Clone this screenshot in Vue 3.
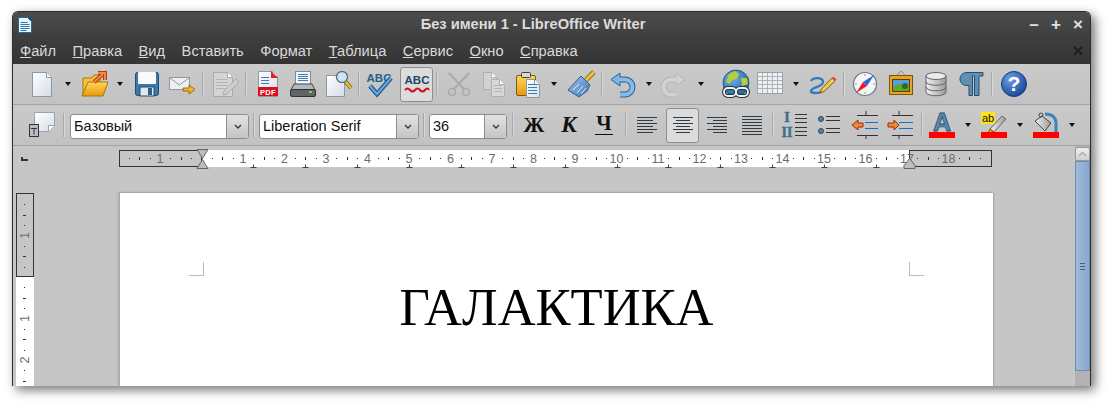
<template>
  <div class="shot">
    <svg class="defs" width="0" height="0">
      <defs>
        <linearGradient id="paper" x1="0" y1="0" x2="1" y2="1"><stop offset="0" stop-color="#fff" /><stop offset="1" stop-color="#d5dde8" /></linearGradient>
        <linearGradient id="folder" x1="0" y1="0" x2="0" y2="1"><stop offset="0" stop-color="#ffd65c" /><stop offset="1" stop-color="#e99a0c" /></linearGradient>
        <linearGradient id="blue" x1="0" y1="0" x2="1" y2="1"><stop offset="0" stop-color="#a5c8ee" /><stop offset="1" stop-color="#3a74b4" /></linearGradient>
        <linearGradient id="steel" x1="0" y1="0" x2="1" y2="0"><stop offset="0" stop-color="#f2f2f2" /><stop offset="1" stop-color="#9a9a9a" /></linearGradient>
        <radialGradient id="ball" cx=".35" cy=".3" r=".8"><stop offset="0" stop-color="#6d9ee0" /><stop offset="1" stop-color="#123f94" /></radialGradient>
        <radialGradient id="earth" cx=".35" cy=".3" r=".8"><stop offset="0" stop-color="#6fb0e6" /><stop offset="1" stop-color="#1d5f9e" /></radialGradient>
      </defs>
    </svg>

    <div class="window">
      <div class="titlebar">
        <svg class="app-icon" width="14" height="16" viewBox="0 0 14 16">
          <path d="M.5.5h9l4 4v11H.5z" fill="#eef4fa" stroke="#1d6a9e" />
          <path d="M9.5.5h4v4z" fill="#14507c" />
          <path d="M2.5 5.500h7M2.500 7.500h9M2.500 9.500h9M2.500 11.500h9M2.500 13.500h6" stroke="#2a79ae" />
        </svg>
        <div class="title">Без имени 1 - LibreOffice Writer</div>
        <div class="win-btns"><span>–</span><span>+</span><span>×</span></div>
      </div>

      <div class="menubar">
        <span v-for="m in menus" :key="m.join('')" class="menu-item">{{ m[0] }}<u>{{ m[1] }}</u>{{ m[2] }}</span>
        <span class="menu-close">×</span>
      </div>

      <div v-for="(row, r) in rows" :key="r" class="toolbar">
        <template v-for="item in row" :key="item.x">
          <div v-if="item.kind === 'grip'" class="grip" :style="{ marginLeft: item.ml + 'px' }"></div>
          <div v-else-if="item.kind === 'sep'" class="sep" :style="{ marginLeft: item.ml + 'px' }"></div>
          <div v-else-if="item.kind === 'dd'" class="drop" :style="{ marginLeft: item.ml + 'px' }"></div>
          <div v-else-if="item.kind === 'combo'" class="combo" :style="{ marginLeft: item.ml + 'px', width: item.w + 'px' }">
            <span class="combo-text">{{ item.text }}</span>
            <span class="combo-btn">
              <svg width="8" height="5" viewBox="0 0 8 5"><path d="M1 1l3 3 3-3" fill="none" stroke="#333" stroke-width="1.300" /></svg>
            </span>
          </div>
          <div v-else class="tool" :class="{ active: item.active, off: item.off }" :style="{ marginLeft: item.ml + 'px', width: item.w + 'px' }">
            <svg width="30" height="30" viewBox="0 0 30 30" v-html="icons[item.icon]"></svg>
          </div>
        </template>
      </div>

      <div class="work">
        <div class="work-main">
          <div class="ruler-row">
            <div class="tab-mark"></div>
            <svg class="h-ruler" width="875" height="20" viewBox="0 0 875 20">
              <rect x="82" y="1" width="709" height="17" fill="#fff" />
              <rect x=".5" y="1.500" width="82" height="16" fill="none" stroke="#333" />
              <rect x="790.500" y="1.500" width="82" height="16" fill="none" stroke="#333" />
              <template v-for="m in hMarks" :key="m.k">
                <text v-if="m.label" :x="m.x" y="14" class="r-num" text-anchor="middle">{{ m.label }}</text>
                <rect v-else-if="m.half" :x="m.x" y="8" width="1" height="3" fill="#333" />
                <rect v-else :x="m.x" y="9" width="1" height="1" fill="#333" />
              </template>
              <path v-for="t in hTabs" :key="t" :d="`M${t} 15.500v3M${t - 3} 18.500h6`" stroke="#444" fill="none" />
              <path d="M78 .5h11l-5.500 9zM78 19.500h11l-5.500-9z" fill="#bdbdbd" stroke="#666" />
              <path d="M785 19.500h11v-3l-5.500-7-5.500 7z" fill="#bdbdbd" stroke="#666" />
            </svg>
          </div>
          <div class="doc-row">
            <svg class="v-ruler" width="18" height="193" viewBox="0 0 18 193">
              <rect x="0" y="84" width="18" height="109" fill="#fff" />
              <rect x=".5" y=".5" width="17" height="83" fill="none" stroke="#333" />
              <template v-for="m in vMarks" :key="m.k">
                <text v-if="m.label" class="r-num" text-anchor="middle" :transform="`translate(13 ${m.y}) rotate(-90)`">{{ m.label }}</text>
                <rect v-else-if="m.half" x="7" :y="m.y" width="3" height="1" fill="#333" />
                <rect v-else x="8" :y="m.y" width="1" height="1" fill="#333" />
              </template>
            </svg>
            <div class="page">
              <div class="marks"><i class="mark-l"></i><i class="mark-r"></i></div>
              <h1 class="doc-text">ГАЛАКТИКА</h1>
            </div>
          </div>
        </div>
        <div class="scrollbar">
          <div class="sb-up">
            <svg width="9" height="6" viewBox="0 0 9 6"><path d="M1 5l3.500-3.500L8 5" fill="none" stroke="#aaa" stroke-width="1.300" /></svg>
          </div>
          <div class="sb-thumb"><b></b><b></b><b></b></div>
        </div>
      </div>
    </div>
  </div>
</template>

<script setup>
const menus = [
  ['', 'Ф', 'айл'], ['', 'П', 'равка'], ['', 'В', 'ид'], ['Вставить', '', ''], ['Фо', 'р', 'мат'],
  ['', 'Т', 'аблица'], ['', 'С', 'ервис'], ['', 'О', 'кно'], ['', 'С', 'правка'],
]

const doc = (x, y, w, h, f = 'url(#paper)', s = '#8b98a8') =>
  `<path d="M${x + .5} ${y + .5}h${w - 6}l5 5v${h - 5}h-${w - 1}z" fill="${f}" stroke="${s}"/><path d="M${x + w - 5.500} ${y + .5}v5h5" fill="#fff" stroke="${s}"/>`
const lines = (x, ys, w, c = '#3b7cb5') => ys.map(y => `<path d="M${x} ${y + .5}h${w}" stroke="${c}"/>`).join('')
const redBar = `<rect x="2" y="22" width="26" height="6" fill="#f00"/>`

const icons = {
  new: doc(5, 3, 20, 24),
  open: `<path d="M3 9h9l2-3h6v20H3z" fill="#f4c33c" stroke="#a87708"/><path d="M8 13h20l-5 14H2z" fill="url(#folder)" stroke="#a87708"/><path d="M14 13l9-8M18 4h7v7" fill="none" stroke="#b5391a" stroke-width="4"/><path d="M14 13l9-8M18 4h7v7" fill="none" stroke="#f08a3c" stroke-width="2"/>`,
  save: `<rect x="3.500" y="3.500" width="23" height="23" rx="2" fill="#3c78aa" stroke="#1e4d78"/><rect x="6" y="3" width="18" height="12" rx="1" fill="#f8fafb"/><rect x="8" y="18" width="14" height="9" fill="#e2e8ec" stroke="#1e4d78"/><rect x="16" y="19" width="4" height="7" fill="#2e5f8c"/>`,
  mail: `<rect x="2.500" y="8.500" width="20" height="12" fill="#eef1f4" stroke="#8d99a6"/><path d="M3 9l9.500 7L22 9" fill="none" stroke="#8d99a6"/><path d="M16 19h6v-3l6 4.500-6 4.500v-3h-6z" fill="#f3b32c" stroke="#a06b10"/>`,
  edit: doc(3, 3, 20, 24, '#d4d4d4', '#aaa') + lines(6, [10, 13, 16, 19], 12, '#b5b5b5') + `<path d="M14 22l12-12 3 3-12 12-4 1z" fill="#cfcfcf" stroke="#aaa"/>`,
  pdf: doc(5, 2, 20, 25) + `<path d="M18 2l7 7h-7z" fill="#e0202a"/>` + lines(8, [8, 11, 14], 8) + `<rect x="5" y="18" width="20" height="9" fill="#d6101c"/><text x="15" y="25.500" text-anchor="middle" class="pdf">PDF</text>`,
  print: `<rect x="7.500" y="2.500" width="15" height="14" fill="#f4f7fa" stroke="#7e8c9a"/>` + lines(10, [5, 7, 9, 11], 10) + `<path d="M6 15h18l3.500 7H2.500z" fill="#b4b9bd" stroke="#444"/><rect x="2.500" y="20.500" width="25" height="7" rx="1.500" fill="#5e6468" stroke="#2e3336"/><rect x="21" y="22" width="3" height="2" fill="#7dd040"/>`,
  preview: doc(2, 6, 19, 21) + `<path d="M21 12l6 7" stroke="#8a6a10" stroke-width="4"/><path d="M21 12l6 7" stroke="#e8c23a" stroke-width="2"/><circle cx="18" cy="8" r="5.500" fill="#cfe4f6" stroke="#62717e" stroke-width="1.400"/>`,
  spell: `<text x="14" y="13" text-anchor="middle" class="abc c1">ABC</text><path d="M5 17l7 8L26 9" fill="none" stroke="#1d4f80" stroke-width="4.500"/><path d="M5 17l7 8L26 9" fill="none" stroke="#62a8e8" stroke-width="2.400"/>`,
  wave: `<text x="15" y="15" text-anchor="middle" class="abc c2">ABC</text><path d="M3 21q2.500-3 5 0t5 0 5 0 5 0 4 0" fill="none" stroke="#d3121c" stroke-width="2"/>`,
  cut: `<circle cx="8" cy="23" r="3.500" fill="none" stroke="#aaa" stroke-width="1.600"/><circle cx="22" cy="23" r="3.500" fill="none" stroke="#aaa" stroke-width="1.600"/><path d="M10 20L25 4M20 20L5 4" stroke="#aaa" stroke-width="2"/>`,
  copy: doc(4, 3, 14, 17, '#d2d2d2', '#b0b0b0') + doc(12, 10, 14, 17, '#d8d8d8', '#b0b0b0') + lines(15, [16, 19, 22], 8, '#b5b5b5'),
  paste: `<rect x="3.500" y="6.500" width="19" height="20" rx="1.500" fill="url(#folder)" stroke="#7d5a10"/><rect x="8.500" y="3.500" width="9" height="5" rx="1" fill="#d7d7d7" stroke="#444"/>` + doc(13, 10, 14, 18) + lines(15, [15, 18, 21, 24], 9),
  brush: `<path d="M20 11l8-8" stroke="#96701a" stroke-width="5"/><path d="M20 11l8-8" stroke="#efc040" stroke-width="3"/><path d="M15 7l9 9-3 6-8 6-11-7z" fill="url(#blue)" stroke="#2c5f94"/><path d="M7 21l6-6M11 24l6-7M15 25l5-6" stroke="#e4f0fb"/>`,
  undo: `<path d="M11 10.500h6a7.500 7.500 0 010 15h-5" fill="none" stroke="#29608f" stroke-width="6"/><path d="M3 10.500L12 4v13z" fill="#7fb4e2" stroke="#29608f"/><path d="M11 10.500h6a7.500 7.500 0 010 15h-5" fill="none" stroke="#86bbe8" stroke-width="4"/>`,
  redo: `<path d="M19 10.500h-6a7.500 7.500 0 000 15h5" fill="none" stroke="#b5b5b5" stroke-width="6"/><path d="M27 10.500L18 4v13z" fill="#d2d2d2" stroke="#b5b5b5"/><path d="M19 10.500h-6a7.500 7.500 0 000 15h5" fill="none" stroke="#d2d2d2" stroke-width="4"/>`,
  globe: `<circle cx="15" cy="14" r="13" fill="url(#earth)" stroke="#2a5c70"/><path d="M8 5l6-3 4 3-2 5-5 1-2 4-4-2zM20 9l6 0 1 6-6 2z" fill="#b5cd3a"/><rect x="3" y="19" width="12" height="8" rx="4" fill="none" stroke="#27343e" stroke-width="4"/><rect x="15" y="19" width="12" height="8" rx="4" fill="none" stroke="#27343e" stroke-width="4"/><rect x="3" y="19" width="12" height="8" rx="4" fill="none" stroke="#eef2f4" stroke-width="1.800"/><rect x="15" y="19" width="12" height="8" rx="4" fill="none" stroke="#eef2f4" stroke-width="1.800"/>`,
  table: `<rect x="2.500" y="3.500" width="25" height="21" fill="#eef0f2" stroke="#9aa2aa"/><path d="M7.500 4v20M12.500 4v20M17.500 4v20M22.500 4v20M3 7.500h24M3 11.500h24M3 15.500h24M3 19.500h24" stroke="#aab2ba"/>`,
  draw: `<path d="M4 12C6 8 16 8 16 13 16 18 4 18 4 22 4 25 12 24 14 23" fill="none" stroke="#2f78c4" stroke-width="2.400"/><path d="M13 24l1.500-4L25 9l3 3-11 10.500z" fill="#f3cd4a" stroke="#7a5a12"/><path d="M25 9l1.500-1.500 3 3L28 12z" fill="#e2484c"/>`,
  nav: `<circle cx="15" cy="15" r="11.500" fill="#f5f5f5" stroke="#6c7680" stroke-width="1.200"/><path d="M15 5v2M15 23v2M5 15h2M23 15h2" stroke="#999"/><path d="M24 6l-11 7 4 4z" fill="#2a68d8"/><path d="M6 24l7-11 4 4z" fill="#e81e2c"/>`,
  gallery: `<path d="M11 6l4-4 4 4" fill="none" stroke="#8c8c8c"/><rect x="3.500" y="6.500" width="23" height="19" fill="#eaa520" stroke="#7c5208"/><rect x="6.500" y="10.500" width="17" height="12" fill="#55a0dc" stroke="#5c3c08"/><path d="M7 18l6-3 10 2v5H7z" fill="#5ea82c"/><circle cx="19" cy="17" r="3" fill="#2c6c1a"/>`,
  db: `<path d="M5 7v16c0 5 20 5 20 0V7z" fill="url(#steel)" stroke="#666"/><ellipse cx="15" cy="7" rx="10" ry="3.500" fill="#e8ecef" stroke="#666"/><path d="M5 12.500c0 5 20 5 20 0M5 18c0 5 20 5 20 0" fill="none" stroke="#666"/>`,
  para: `<path d="M27 3.500H11C6 3.500 4 7 4 10s2 6.500 7 6.500h2v10h3.500V7h2v19.500H23V7h4z" fill="#5f8fb4" stroke="#24506f"/>`,
  help: `<circle cx="15" cy="15" r="12.500" fill="url(#ball)" stroke="#123a80"/><text x="15" y="22" text-anchor="middle" class="q">?</text>`,

  styles: `<path d="M6.500 2.500h20v13l-6 6H6.500z" fill="url(#paper)" stroke="#9aa4ae"/><path d="M20.500 21.500v-6h6" fill="#fff" stroke="#9aa4ae"/><rect x="1.500" y="14.500" width="9" height="12" fill="#b9bdc1" stroke="#333"/><path d="M3 18.500h6M6 18.500v6" stroke="#333"/>`,
  bold: `<text x="15" y="22" text-anchor="middle" class="ser b">Ж</text>`,
  italic: `<text x="15" y="22" text-anchor="middle" class="ser i">К</text>`,
  under: `<text x="15" y="20" text-anchor="middle" class="ser b">Ч</text><path d="M6 24.500h18" stroke="#111"/>`,
  alignL: lines(5, [7, 13, 19], 20, '#2e3a46') + lines(5, [10, 16, 22], 16, '#2e3a46'),
  alignC: lines(5, [7, 13, 19], 20, '#2e3a46') + lines(8, [10, 16, 22], 14, '#2e3a46'),
  alignR: lines(5, [7, 13, 19], 20, '#2e3a46') + lines(11, [10, 16, 22], 14, '#2e3a46'),
  alignJ: lines(5, [6, 9, 12, 15, 18, 21, 24], 20, '#2e3a46'),
  num: `<text x="7" y="12" text-anchor="middle" class="ser nm">I</text><text x="7" y="27" text-anchor="middle" class="ser nm">II</text>` + lines(15, [4, 8, 12, 17, 21, 25], 12, '#333'),
  bullet: `<circle cx="6" cy="9" r="2.500" fill="#54809e" stroke="#2c4a5e"/><circle cx="6" cy="21" r="2.500" fill="#54809e" stroke="#2c4a5e"/>` + lines(11, [6, 10, 18, 22], 14, '#333'),
  indL: lines(7, [5, 25], 21, '#333') + lines(15, [12, 18], 13, '#1470c8') + `<path d="M16 1v4M16 25v4" stroke="#333"/><path d="M2 15l6-5v3h5v4H8v3z" fill="#f08a2c" stroke="#9a2d10"/>`,
  indR: lines(5, [5, 25], 21, '#333') + lines(12, [12, 18], 14, '#1470c8') + `<path d="M12 1v4M12 25v4" stroke="#333"/><path d="M12 15L7 10v3H1v4h6v3z" fill="#f08a2c" stroke="#9a2d10"/>`,
  fontCol: `<text x="15" y="21" text-anchor="middle" class="acol">A</text>` + redBar,
  hilite: `<rect x="2" y="2" width="14" height="12" fill="#ffe21a"/><text x="9" y="12" text-anchor="middle" class="ab">ab</text><path d="M11 19l12-13 4 3-12 13z" fill="url(#steel)" stroke="#666"/><path d="M9 23l2-4 4 3z" fill="#f0a020" stroke="#8a5a10"/>` + redBar,
  fill: `<path d="M4 11l7-5 9 7-6 8z" fill="url(#steel)" stroke="#444"/><circle cx="10" cy="5" r="2" fill="none" stroke="#444"/><path d="M14 4q10 0 11 8v11h-2" fill="none" stroke="#3d82be" stroke-width="3"/>` + redBar,
}

// x is the centre of each item in page pixels, margins follow from it
const flow = items => {
  let end = 13
  return items.map(([x, kind, extra]) => {
    const w = kind === 'grip' ? 4 : kind === 'sep' ? 2 : kind === 'dd' ? 8 : (extra && extra.w) || 30
    const it = { x, kind, w, ml: x - w / 2 - end, icon: kind, ...extra }
    end = x + w / 2
    return it
  })
}

const rows = [
  flow([
    [17, 'grip'], [42, 'new'], [68, 'dd'], [95, 'open'], [120, 'dd'], [147, 'save'], [182, 'mail'], [203, 'sep'],
    [225, 'edit', { off: true }], [246, 'sep'], [268, 'pdf'], [303, 'print'], [339, 'preview'], [359, 'sep'],
    [380, 'spell'], [416.5, 'wave', { active: true, w: 33 }], [437, 'sep'], [459, 'cut'], [494, 'copy'], [528, 'paste'],
    [554, 'dd'], [581, 'brush'], [602, 'sep'], [623, 'undo'], [649, 'dd'], [673, 'redo'], [701, 'dd'], [736, 'globe'],
    [770, 'table'], [796, 'dd'], [822, 'draw'], [844, 'sep'], [865, 'nav'], [901, 'gallery'], [936, 'db'], [971, 'para'],
    [992, 'sep'], [1014, 'help'],
  ]),
  flow([
    [17, 'grip'], [43, 'styles'], [64, 'sep'], [159.5, 'combo', { w: 179, text: 'Базовый' }], [254, 'sep'],
    [339, 'combo', { w: 160, text: 'Liberation Serif' }], [424, 'sep'], [468, 'combo', { w: 78, text: '36' }], [513, 'sep'],
    [534, 'bold'], [569, 'italic'], [604, 'under'], [626, 'sep'], [647, 'alignL'], [682.5, 'alignC', { active: true, w: 33 }],
    [717, 'alignR'], [752, 'alignJ'], [773, 'sep'], [795, 'num'], [830, 'bullet'], [865, 'indL'], [902, 'indR'], [922, 'sep'],
    [942, 'fontCol'], [968, 'dd'], [994, 'hilite'], [1020, 'dd'], [1046, 'fill'], [1072, 'dd'],
  ]),
]

const STEP = 41.5
const hMarks = []
for (let k = -7; k <= 75; k++) {
  const n = k / 4
  const x = 82.5 + n * STEP
  if (k === 0) continue
  if (k % 4 === 0) hMarks.push({ k, x, label: String(Math.abs(n)) })
  else hMarks.push({ k, x: Math.round(x), half: k % 2 === 0 })
}
const hTabs = []
for (let n = 1; n <= 13; n++) hTabs.push(Math.round(82.5 + n * 1.25 * STEP) + .5)

const vMarks = []
for (let k = -7; k <= 10; k++) {
  const n = k / 4
  const y = 84 + n * STEP
  if (k === 0) continue
  if (k % 4 === 0) vMarks.push({ k, y, label: String(Math.abs(n)) })
  else vMarks.push({ k, y: Math.round(y), half: k % 2 === 0 })
}
</script>

<style>
html, body { background: #fff; overflow: hidden; }
.pdf { font: 700 7.500px "Liberation Sans", sans-serif; fill: #fff; letter-spacing: .3px; }
.abc { font: 700 11.500px "Liberation Sans", sans-serif; }
.c1 { fill: #2a5f8e; }
.c2 { fill: #23456a; }
.q { font: 700 21px "Liberation Sans", sans-serif; fill: #fff; }
.ser { font-family: "Liberation Serif", serif; fill: #111; }
.ser.b { font-size: 21px; font-weight: 700; }
.ser.i { font-size: 23px; font-weight: 700; font-style: italic; }
.ser.nm { font-size: 14px; font-weight: 700; fill: #3f6d90; stroke: #3f6d90; stroke-width: .4px; }
.acol { font: 700 25px "Liberation Sans", sans-serif; fill: #5b8bb0; stroke: #24506f; stroke-width: .8px; }
.ab { font: 400 11px "Liberation Sans", sans-serif; fill: #111; }
</style>

<style scoped>
.shot {
  width: 1110px;
  height: 405px;
  padding: 11px 0 0 12px;
  box-sizing: border-box;
  overflow: hidden;
  font-family: "Liberation Sans", Arial, sans-serif;
}
.defs { display: block; height: 0; }
.window {
  width: 1079px;
  height: 375px;
  box-sizing: border-box;
  display: flex;
  flex-direction: column;
  border: 1px solid #2e2e2e;
  border-bottom: 0;
  border-radius: 6px 6px 0 0;
  background: #c6c6c6;
  box-shadow: 4px 4px 11px rgba(0, 0, 0, .55);
  overflow: hidden;
}
.titlebar {
  height: 26px;
  flex: none;
  display: flex;
  align-items: center;
  padding: 0 5px;
  background: linear-gradient(#4c4c4c, #3e3e3e);
}
.app-icon { flex: none; margin-top: -1px; }
.title {
  flex: 1;
  text-align: center;
  padding-left: 7px;
  color: #dcdcdc;
  font-size: 14.670px;
  font-weight: 700;
  margin-top: -2px;
}
.win-btns { display: flex; gap: 8px; color: #e0e0e0; font-size: 17px; font-weight: 700; }
.win-btns span { width: 14px; text-align: center; }
.menubar {
  height: 26px;
  flex: none;
  display: flex;
  align-items: center;
  padding-left: 7px;
  color: #dadada;
  font-size: 14.670px;
  background: linear-gradient(#3e3e3e, #343434);
}
.menu-item { margin-right: 16.500px; white-space: nowrap; }
.menu-close { margin-left: auto; margin-right: 5px; width: 14px; text-align: center; color: #1e1e1e; font-size: 19px; font-weight: 700; }
.toolbar {
  height: 40px;
  flex: none;
  display: flex;
  align-items: center;
  background: linear-gradient(#cacaca, #c2c2c2);
  border-bottom: 1px solid #a4a4a4;
}
.tool {
  flex: none;
  height: 30px;
  display: flex;
  align-items: center;
  justify-content: center;
}
.tool svg { flex: none; overflow: visible; }
.tool.active {
  height: 35px;
  box-sizing: border-box;
  border: 1px solid #8e8e8e;
  border-radius: 3px;
  background: #dcdcdc;
}
.grip {
  flex: none;
  width: 4px;
  height: 18px;
  background: radial-gradient(circle, #8c8c8c 45%, transparent 50%) 0 0 / 2px 2px;
}
.sep { flex: none; width: 2px; height: 24px; background: linear-gradient(90deg, #a8a8a8 50%, #d8d8d8 50%); }
.drop { flex: none; width: 8px; height: 4px; position: relative; }
.drop::after {
  content: "";
  display: block;
  width: 0;
  margin-left: 1px;
  border: 3px solid transparent;
  border-top: 4px solid #111;
  border-bottom: 0;
}
.combo {
  flex: none;
  height: 25px;
  margin-top: 3px;
  box-sizing: border-box;
  display: flex;
  border: 1px solid #8c8c8c;
  border-radius: 3px;
  background: #fff;
  overflow: hidden;
}
.combo-text { flex: 1; padding-left: 3px; font-size: 14.500px; line-height: 23px; color: #111; white-space: nowrap; }
.combo-btn {
  width: 21px;
  flex: none;
  display: flex;
  align-items: center;
  justify-content: center;
  border-left: 1px solid #8c8c8c;
  background: linear-gradient(#e2e2e2, #c4c4c4);
}
.work { flex: 1; min-height: 0; display: flex; }
.work-main { flex: 1; min-width: 0; display: flex; flex-direction: column; }
.ruler-row { height: 47px; flex: none; display: flex; padding: 3px 0 0 8px; box-sizing: border-box; }
.tab-mark {
  width: 7px;
  height: 4px;
  margin-top: 8px;
  border-left: 2px solid #333;
  border-bottom: 2px solid #333;
  box-sizing: border-box;
}
.h-ruler { margin-left: 91px; flex: none; }
.r-num { font-family: "Liberation Sans", sans-serif; font-size: 12.500px; fill: #6c6c6c; }
.doc-row { flex: 1; min-height: 0; display: flex; padding-left: 3px; }
.v-ruler { flex: none; }
.page {
  width: 873px;
  margin-left: 86px;
  padding: 69px 69px 0;
  box-sizing: border-box;
  background: #fff;
  box-shadow: -1px -1px 1px #a8a8a8, 1px 0 1px #a8a8a8, -2px 0 3px #b0b0b0;
}
.marks { display: flex; justify-content: space-between; }
.marks i { display: block; width: 15px; height: 14px; box-sizing: border-box; border-bottom: 1px solid #bcbcbc; }
.mark-l { border-right: 1px solid #bcbcbc; }
.mark-r { border-left: 1px solid #bcbcbc; }
.doc-text {
  margin: 0;
  text-align: center;
  font: 400 52.500px/62px "Liberation Serif", "Times New Roman", serif;
  color: #000;
}
.scrollbar { width: 15px; flex: none; display: flex; flex-direction: column; padding-top: 1px; background: #b2b2b2; }
.sb-up {
  height: 14px;
  display: flex;
  align-items: center;
  justify-content: center;
  box-sizing: border-box;
  border: 1px solid #9a9a9a;
  border-radius: 3px 3px 0 0;
  background: linear-gradient(#f0f0f0, #d0d0d0);
}
.sb-thumb {
  height: 210px;
  box-sizing: border-box;
  display: flex;
  flex-direction: column;
  align-items: center;
  justify-content: center;
  gap: 2px;
  border: 1px solid #6f8eaf;
  background: linear-gradient(90deg, #9dbbdc, #87a8cc);
}
.sb-thumb b { width: 5px; height: 1px; background: #44607e; }
</style>
